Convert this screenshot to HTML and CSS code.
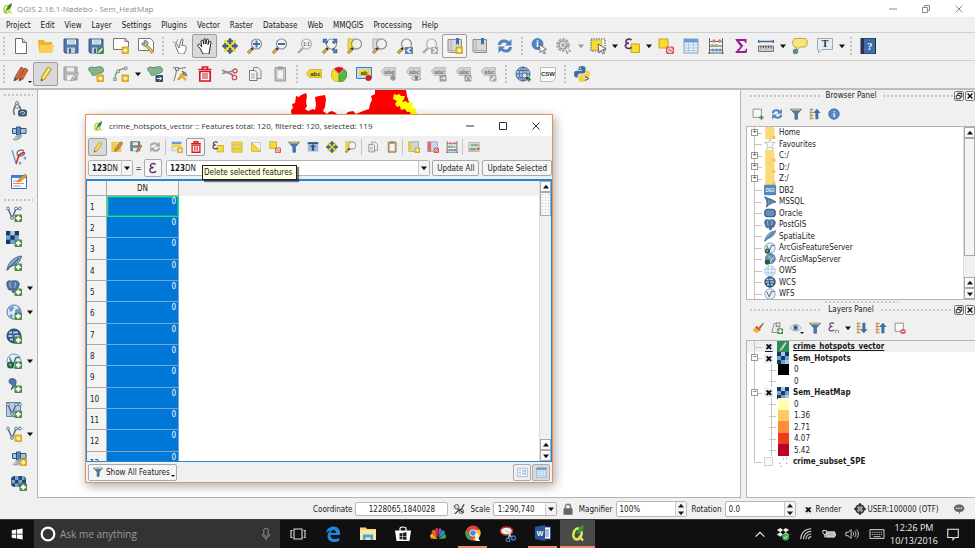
FILE: index.html
```html
<!DOCTYPE html>
<html lang="en">
<head>
<meta charset="utf-8">
<title>QGIS 2.16.1-Nødebo - Sem_HeatMap</title>
<link rel="stylesheet" href="styles.css">
</head>
<body>
<svg class="sprite" aria-hidden="true">
  <!-- badges -->
  <symbol id="plus" viewBox="0 0 16 16"><rect x="8.500" y="8.500" width="7.500" height="7.500" rx="1" fill="#4c8a4c"/><path d="M12.300 9.800v5M9.800 12.300h5" stroke="#fff" stroke-width="2"/></symbol>
  <symbol id="star" viewBox="0 0 16 16"><rect x="8.500" y="8.500" width="7.500" height="7.500" rx="1" fill="#d6ab1c"/><path d="M12.300 9.800v5M9.800 12.300h5M10.500 10.500l3.600 3.600M14.100 10.500l-3.600 3.600" stroke="#fff6c8" stroke-width="1"/></symbol>
  <symbol id="lens" viewBox="0 0 16 16"><path d="M1 15l5-5" stroke="#333" stroke-width="2.600"/><path d="M1 15l3.500-3.500" stroke="#e8b51c" stroke-width="2"/><circle cx="9.500" cy="6" r="5" fill="#f4f4f2" fill-opacity=".85" stroke="#8e8e8e" stroke-width="1.200"/></symbol>
  <symbol id="lens-grey" viewBox="0 0 16 16"><path d="M1 15l5-5" stroke="#a9a9a9" stroke-width="2.400"/><circle cx="9.500" cy="6" r="5" fill="#f3f3f3" stroke="#b3b3b3" stroke-width="1.200"/></symbol>
  <symbol id="cells" viewBox="0 0 12 12"><path fill="#6f9fd4" d="M0 0h12v12H0z"/><path fill="#173a63" d="M0 0h4v4H0zM8 0h4v4H8zM4 4h4v4H4zM0 8h4v4H0z"/><path fill="#a9c9ea" d="M4 0h4v4H4zM8 8h4v4H8z"/></symbol>
  <symbol id="globe" viewBox="0 0 16 16"><circle cx="8" cy="8" r="7" fill="#a9c6e6" stroke="#3f6a9b"/><path d="M8 1v14M1 8h14M2.500 4.500h11M2.500 11.500h11M8 1C3 4 3 12 8 15M8 1c5 3 5 11 0 14" fill="none" stroke="#3f6a9b" stroke-width=".9"/></symbol>

  <!-- project -->
  <symbol id="qgis" viewBox="0 0 16 16"><ellipse cx="7" cy="9" rx="4" ry="5.500" fill="none" stroke="#c9d85a" stroke-width="3" transform="rotate(15 7 9)"/><path d="M10 12l4 3" stroke="#c9d85a" stroke-width="2.500"/><path d="M4 15C6 10 7 4 14 0c1 5-2 9-6 10z" fill="#2e8b3d"/></symbol>
  <symbol id="new" viewBox="0 0 16 16"><path d="M2.500.5h7l4 4v11h-11z" fill="#fff" stroke="#6c6c6c"/><path d="M9.500.5v4h4" fill="#ddd" stroke="#6c6c6c"/></symbol>
  <symbol id="open" viewBox="0 0 16 16"><path d="M0 2h6l1 2h7v10H1z" fill="#eab52b"/><path d="M2 7h14l-2 8H1z" fill="#f9cf57"/></symbol>
  <symbol id="save" viewBox="0 0 16 16"><path d="M1 1h14v14H2l-1-1z" fill="#4c78ad" stroke="#365f92"/><path d="M4 1.500h9v5H4z" fill="#e9eef3"/><path d="M5 3h7M5 5h7" stroke="#9aa" stroke-width=".7"/><path d="M4 9.500h8V15H4z" fill="#c9cdd1"/><path d="M6 10.500h2V15H6z" fill="#3d5f86"/></symbol>
  <symbol id="saveas" viewBox="0 0 16 16"><use href="#save"/><rect x="9" y="9" width="7" height="7" rx="1" fill="#4c8a5c"/><path d="M10.500 14.500l4-4" stroke="#fff" stroke-width="1.500"/></symbol>
  <symbol id="composer" viewBox="0 0 16 16"><path d="M.5.500h12l3 3v8H.5z" fill="#fff" stroke="#777"/><path d="M12 .5v3h3.500" fill="#ddd" stroke="#777"/><use href="#star"/></symbol>
  <symbol id="manager" viewBox="0 0 16 16"><path d="M.5.500h12l3 3v9H.5z" fill="#fff" stroke="#777"/><path d="M9 8l6 7" stroke="#8b7420" stroke-width="3"/><path d="M9 8l6 7" stroke="#f0d15a" stroke-width="1.500"/><path d="M4 5l2.500 1L6 3c2-1 4 0 4 2.500L8.500 8C6 9 4 7.500 4 5z" fill="#bbb" stroke="#555" stroke-width=".8"/></symbol>

  <!-- navigation -->
  <symbol id="touch" viewBox="0 0 16 16"><path d="M7 10L5 6.500c-1-1-2 0-1.500 1L6 14l1 2h5l2-4V8.500c0-1-1.500-1.500-2-.5-.5-1-2-1-2 0l1-6c0-1.500-1.500-1.500-1.800-.2z" fill="#fff" stroke="#666" stroke-width=".9"/><path d="M1 4l4 1M6 1L3 8" stroke="#888" stroke-width=".8"/></symbol>
  <symbol id="hand" viewBox="0 0 16 16"><path d="M6 16L3.500 11 1 8c-1-1.500 1-2.300 2-1.300l1.700 2L4 3.500C3.800 2 5.500 1.600 6 3l.8 3V1.700c0-1.400 2-1.400 2 0V6l.8-4c.3-1.300 2-1 1.900.4L11 6.500l1.200-2.700c.7-1.200 2-.5 1.700.8L13 10l-1 6z" fill="#fff" stroke="#111" stroke-width=".9"/></symbol>
  <symbol id="pan" viewBox="0 0 16 16"><path d="M2 2h12v12H2z" fill="#f6dc34"/><path d="M8 0l3 3.500H9V6H7V3.500H5zM8 16l-3-3.500h2V10h2v2.500h2zM0 8l3.500-3v2H6v2H3.500v2zM16 8l-3.500 3V9H10V7h2.500V5z" fill="#3a67a3" stroke="#234677" stroke-width=".5"/></symbol>
  <symbol id="zoomin" viewBox="0 0 16 16"><use href="#lens"/><path d="M9.500 2.500v7M6 6h7" stroke="#3b6eb0" stroke-width="2"/></symbol>
  <symbol id="zoomout" viewBox="0 0 16 16"><use href="#lens"/><path d="M6 6h7" stroke="#3b6eb0" stroke-width="2"/></symbol>
  <symbol id="zoom11" viewBox="0 0 16 16"><use href="#lens-grey"/><text x="9.500" y="8" class="glyph-5" text-anchor="middle" fill="#666">1:1</text></symbol>
  <symbol id="zoomfull" viewBox="0 0 16 16"><use href="#lens"/><path d="M1 1h4L3.800 2.200 6 4 4 6 2.200 3.800 1 5zM15 1v4l-1.200-1.200L12 6l-2-2 2.200-1.800L11 1zM15 15h-4l1.200-1.200L10 12l2-2 1.800 2.200L15 11z" fill="#4e7fb8" stroke="#2b5288" stroke-width=".5"/></symbol>
  <symbol id="zoomsel" viewBox="0 0 16 16"><path d="M1 1h9v10H1z" fill="#f6dc34" stroke="#b99e1e" stroke-width=".6"/><use href="#lens"/></symbol>
  <symbol id="zoomlayer" viewBox="0 0 16 16"><path d="M1 1h9v10H1z" fill="#ddd" stroke="#888" stroke-width=".6"/><use href="#lens"/></symbol>
  <symbol id="zoomprev" viewBox="0 0 16 16"><use href="#lens"/><rect x="8" y="9" width="8" height="7" fill="#5a86ba"/><path d="M13.500 10l-3 2.500 3 2.500" fill="none" stroke="#fff" stroke-width="1.400"/></symbol>
  <symbol id="zoomnext" viewBox="0 0 16 16"><use href="#lens-grey"/><rect x="9" y="9" width="7" height="7" fill="#aaa"/><path d="M11 10l3 2.500-3 2.500" fill="none" stroke="#fff" stroke-width="1.400"/></symbol>
  <symbol id="bookmark" viewBox="0 0 16 16"><path d="M1 1.500h13.500v13H3c-1 0-2-.5-2-1.500z" fill="#d8d8d8" stroke="#8a8a8a"/><path d="M4 1.500v11M2 12.500h12" stroke="#aaa"/><path d="M9 0h3v7l-1.500-1.500L9 7z" fill="#3d6ea8"/></symbol>
  <symbol id="bookmarknew" viewBox="0 0 16 16"><use href="#bookmark"/><use href="#star"/></symbol>
  <symbol id="refresh" viewBox="0 0 16 16"><path d="M1 7C1 1.500 8 0 12 3.500L14.500 1v6.500H8l2-2C7 3.500 4.500 4.500 4 7zM15 9c0 5.500-7 7-11 3.500L1.500 15V8.500H8l-2 2c3 2 5.500 1 6-1.500z" fill="#4f84c0"/></symbol>
  <symbol id="refresh-grey" viewBox="0 0 16 16"><path d="M1 7C1 1.500 8 0 12 3.500L14.500 1v6.500H8l2-2C7 3.500 4.500 4.500 4 7zM15 9c0 5.500-7 7-11 3.500L1.500 15V8.500H8l-2 2c3 2 5.500 1 6-1.500z" fill="#a9a9a9"/></symbol>

  <!-- attributes -->
  <symbol id="identify" viewBox="0 0 16 16"><circle cx="6.500" cy="6" r="5.500" fill="#4f84c0" stroke="#2f5f9a" stroke-width=".6"/><text x="6.500" y="9" class="glyph-serif" text-anchor="middle" fill="#fff">i</text><path d="M8.500 6.500l7 5-3 .5 2 3.500-1.500.5-1.800-3.300L9 14.500z" fill="#fff" stroke="#555" stroke-width=".8"/></symbol>
  <symbol id="info" viewBox="0 0 16 16"><circle cx="8" cy="8" r="7" fill="#5488c4" stroke="#3465a0"/><text x="8" y="11.500" class="glyph-serif" text-anchor="middle" fill="#fff">i</text></symbol>
  <symbol id="action" viewBox="0 0 16 16"><circle cx="7" cy="7" r="5.500" fill="none" stroke="#a5a5a5" stroke-width="2.500" stroke-dasharray="2.500 1"/><circle cx="7" cy="7" r="4" fill="#ddd" stroke="#999"/><circle cx="7" cy="7" r="1.500" fill="#999"/><path d="M9 8l6 5-3 .2-.8 2.800z" fill="#fff" stroke="#888" stroke-width=".8"/></symbol>
  <symbol id="select" viewBox="0 0 16 16"><path d="M1 1h14v12H1z" fill="none" stroke="#555" stroke-dasharray="1.500 1"/><path d="M1.500 2h10v10h-10z" fill="#f6dc34" stroke="#b99e1e" stroke-width=".6"/><path d="M8 6l8 5-3.500.7 2 3.500-1.500.8-2-3.500L9 15z" fill="#fff" stroke="#444" stroke-width=".8"/></symbol>
  <symbol id="selexpr" viewBox="0 0 16 16"><path d="M7 6h8.500v8.500H7z" fill="#f6dc34" stroke="#c5a51e"/><path d="M7.500 2C5 .2 1.500 1.500 2 3.800 2.200 5 4 5.200 5 5.200 2.500 5.200 1 6.500 1.500 8.500 2.200 11 6 11 7.500 9.200" fill="none" stroke="#5c3566" stroke-width="1.700"/></symbol>
  <symbol id="deselect" viewBox="0 0 16 16"><path d="M1 1h9v9H1z" fill="#f6dc34" stroke="#c5a51e"/><rect x="8" y="8.500" width="8" height="7.500" rx="1.500" fill="#d9555c"/><circle cx="12" cy="12.200" r="2.300" fill="none" stroke="#fff"/><path d="M10.500 13.800l3-3.200" stroke="#fff"/></symbol>
  <symbol id="table" viewBox="0 0 16 16"><path d="M1 1h14v14H1z" fill="#e8f0f8" stroke="#7da3cc"/><path d="M1 1h14v3.500H1z" fill="#6b9bd0"/><path d="M1 7h14M1 10h14M1 12.500h14M5.500 4v11M10.500 4v11" stroke="#a8c3df" stroke-width=".9"/></symbol>
  <symbol id="abacus" viewBox="0 0 16 16"><path d="M1.500 0v16M14.500 0v16M1 3.500h14M1 8h14M1 12h14M0 15h16" stroke="#666" stroke-width="1"/><circle cx="6" cy="3" r="1.700" fill="#d9777b"/><circle cx="11.500" cy="3" r="1.700" fill="#d9777b"/><circle cx="4.500" cy="7.500" r="1.500" fill="#7bb87b"/><circle cx="8" cy="7.500" r="1.500" fill="#7bb87b"/><circle cx="5" cy="12" r="1.500" fill="#6b93c0"/><circle cx="8.500" cy="12" r="1.500" fill="#6b93c0"/><circle cx="12" cy="12" r="1.500" fill="#6b93c0"/></symbol>
  <symbol id="sigma" viewBox="0 0 16 16"><path d="M2.500 1h11v4h-1.200c-.3-1.600-.8-2-2.300-2H6.200l4 4.700L6 13h4.500c1.500 0 2.200-.8 2.600-2.200h1.200L13.500 15h-11v-1l5-5.500-5-6.500z" fill="#9b1d9b"/></symbol>
  <symbol id="measure" viewBox="0 0 16 16"><path d="M0 3.500h16M.5 2v3M15.500 2v3" stroke="#3c6799" stroke-width="1.500"/><path d="M.5 8h15v5.500H.5z" fill="#ccc" stroke="#777"/><path d="M3 8v2.500M5.500 8v2M8 8v2.500M10.500 8v2M13 8v2.500" stroke="#555"/></symbol>
  <symbol id="maptip" viewBox="0 0 16 16"><path d="M3 .5h10c3 0 3 8 0 8.500H8l-3.500 4V9H3C0 9 0 .5 3 .5z" fill="#f9e47b" stroke="#c5a83a"/><circle cx="3.500" cy="13.500" r="2.300" fill="#5d9c5d" stroke="#3c6799" stroke-width=".8"/></symbol>
  <symbol id="annot" viewBox="0 0 16 16"><path d="M.5.500h15v11H5L1.500 15v-3.500h-1z" fill="#e4eef5" stroke="#99abb8"/><text x="8" y="9" class="glyph-serif" text-anchor="middle" fill="#333">T</text></symbol>
  <symbol id="help" viewBox="0 0 16 16"><path d="M1 0h14.500v16H1z" fill="#3d6ea8" stroke="#1c2c40"/><path d="M1 0h3v16H1z" fill="#22354d"/><text x="9.700" y="11.500" class="glyph-serif" text-anchor="middle" fill="#fff">?</text></symbol>

  <!-- digitizing -->
  <symbol id="pencils" viewBox="0 0 16 16"><path d="M1 15l1-4L8 1l3 2-6 10zM6 15l1-4 5-9 3 2-5 9z" fill="#d2663a" stroke="#8e3d1b" stroke-width=".7"/><path d="M1 15l1-3 2 1zM6 15l1-3 2 1z" fill="#444"/></symbol>
  <symbol id="pencil" viewBox="0 0 16 16"><path d="M3 15l.5-4L10 1l3.500 2L7 13z" fill="#f2d43a" stroke="#9d8720" stroke-width=".8"/><path d="M5.300 12L11.800 2" stroke="#fff3a0" stroke-width="1"/><path d="M3 15l.3-2 1.500 1z" fill="#333"/></symbol>
  <symbol id="savegrey" viewBox="0 0 16 16"><path d="M1 1h13v13H1z" fill="#b5b5b5" stroke="#999"/><path d="M4 1.500h7v4H4zM4 9h7v5H4z" fill="#eee"/><path d="M8 15l1-3 5-6 2 1.500-5 6z" fill="#ccc" stroke="#888" stroke-width=".7"/></symbol>
  <symbol id="addfeat" viewBox="0 0 16 16"><path d="M1 2C3 0 6 2 8 1.500 11 0 15 0 15.500 4c0 4-4 3-6.500 4-2 2-5 2-5.500 0C3.500 6-.5 5 1 2z" fill="#82b58a" stroke="#4d8356" stroke-width=".8"/><use href="#star"/></symbol>
  <symbol id="addcurve" viewBox="0 0 16 16"><path d="M2 13C2 6 6 2.500 13 2.500" fill="none" stroke="#6fae7a" stroke-width="1.400"/><path d="M.7 12h2.600v2.600H.7zM4 4h2.500v2.500H4zM11.500 1h2.600v2.600h-2.600z" fill="#ddd" stroke="#777" stroke-width=".7"/><use href="#star"/></symbol>
  <symbol id="movefeat" viewBox="0 0 16 16"><path d="M1 2C3 0 6 2 8 1.500 11 0 15 0 15.500 4c0 4-4 3-6.500 4-2 2-5 2-5.500 0C3.500 6-.5 5 1 2z" fill="#82b58a" stroke="#4d8356" stroke-width=".8"/><rect x="8.500" y="9" width="7.500" height="7" rx="1" fill="#274a6d"/><path d="M9.800 12.500h4.500M12.300 10.500l2 2-2 2" stroke="#fff" fill="none"/></symbol>
  <symbol id="node" viewBox="0 0 16 16"><path d="M2 15L5 3l9-1.500M5 3L1 1.500" fill="none" stroke="#777"/><path d="M3.500 1.500h3v3h-3z" fill="#ddd" stroke="#666" stroke-width=".8"/><path d="M6 14l6-7" stroke="#cf9c1b" stroke-width="2.200"/><path d="M8 8l6 6" stroke="#e6b82d" stroke-width="2.500"/><path d="M10 5l4 2 1 3-3-1z" fill="#999" stroke="#555" stroke-width=".6"/></symbol>
  <symbol id="trash" viewBox="0 0 16 16"><path d="M1.500 3.500h13M5.500 3V1h5v2" fill="none" stroke="#d8141c" stroke-width="1.700"/><path d="M2.800 5.500h10.400V15H2.800z" fill="#fff" stroke="#d8141c" stroke-width="1.700"/><path d="M6 7v6M8 7v6M10 7v6" stroke="#d8141c" stroke-width="1"/></symbol>
  <symbol id="cut" viewBox="0 0 16 16"><path d="M0 4l11 5M0 7.500L11 5" stroke="#8a8a8a" stroke-width="1.600"/><circle cx="13" cy="5" r="2" fill="none" stroke="#c7545b" stroke-width="1.300"/><circle cx="12.500" cy="11.500" r="2.200" fill="none" stroke="#c7545b" stroke-width="1.300"/><path d="M9 8l2 2" stroke="#c7545b" stroke-width="1.300"/></symbol>
  <symbol id="copy" viewBox="0 0 16 16"><path d="M6.500 1.500h4.500l3 3v8H6.500z" fill="#eee" stroke="#888"/><path d="M2.500 4.500H8l2 2v8H2.500z" fill="#f5f5f5" stroke="#777"/><path d="M4 8h4M4 10h4M4 12h4" stroke="#999" stroke-width=".8"/></symbol>
  <symbol id="paste" viewBox="0 0 16 16"><path d="M3 1.500h10.500v13.500H3z" fill="#c8c8c8" stroke="#999"/><path d="M5 4h6.500v9H5z" fill="#f4f4f4" stroke="#aaa" stroke-width=".6"/><path d="M6 .5h4.500v2.500H6z" fill="#999"/></symbol>
  <symbol id="paste-y" viewBox="0 0 16 16"><path d="M3 1.500h10.500v13.500H3z" fill="#c9a577" stroke="#8e6f45"/><path d="M5 4h6.500v9H5z" fill="#f4f4f4"/><path d="M6 .5h4.500v2.500H6z" fill="#888"/></symbol>

  <!-- labels -->
  <symbol id="label" viewBox="0 0 16 16"><path d="M3.500 3.500H16v8H3.500L0 7.500z" fill="#f3d530" stroke="#c7aa1e" stroke-width=".7"/><text x="9.300" y="9.500" class="glyph-abc" text-anchor="middle" fill="#333">abc</text></symbol>
  <symbol id="label-grey" viewBox="0 0 16 16"><path d="M3.500 1.500H14.500v8H3.500L0 5.500z" fill="#cfcfcf" stroke="#b2b2b2" stroke-width=".7"/><text x="8.500" y="7.500" class="glyph-abc" text-anchor="middle" fill="#777">abc</text></symbol>
  <symbol id="diagram" viewBox="0 0 16 16"><path d="M8 8L2.500 3a7.500 7.500 0 0 1 11 0z" fill="#d8141c" stroke="#fff" stroke-width=".6"/><path d="M8 8.500V16A7.500 7.500 0 0 1 2 3.500z" fill="#f2e02c" stroke="#a9a01a" stroke-width=".6"/><path d="M8 8.500V16a7.500 7.500 0 0 0 6-12.500z" fill="#58b847" stroke="#2f8324" stroke-width=".6"/></symbol>
  <symbol id="labelpin" viewBox="0 0 16 16"><path d="M.5 1.500h15v11H.5z" fill="#bfdcf7" stroke="#3d7bc6"/><path d="M4 3.500h10v6.500H4L1.500 7z" fill="#f3d530"/><text x="8" y="8.700" class="glyph-abc" text-anchor="middle" fill="#333">ab</text><circle cx="12.500" cy="12" r="3" fill="#c81e24"/></symbol>
  <symbol id="labelpin-grey" viewBox="0 0 16 16"><use href="#label-grey"/><path d="M12 5v6" stroke="#888"/><circle cx="12" cy="12" r="2.700" fill="#999"/></symbol>
  <symbol id="labeleye" viewBox="0 0 16 16"><use href="#label-grey"/><path d="M5.500 12.500c2-3 7-3 9.500 0-2.500 2.500-7.500 2.500-9.500 0z" fill="#f1f1f1" stroke="#888"/><circle cx="10.300" cy="12.300" r="1.700" fill="#777"/></symbol>
  <symbol id="labelmove" viewBox="0 0 16 16"><use href="#label-grey"/><rect x="8.500" y="9" width="7" height="6.500" rx="1" fill="#999"/><path d="M10 12.200h4M12.500 10.500l1.800 1.700-1.800 1.700" stroke="#fff" fill="none"/></symbol>
  <symbol id="labelrotate" viewBox="0 0 16 16"><use href="#label-grey"/><rect x="8.500" y="9" width="7" height="6.500" rx="1" fill="#999"/><path d="M10.500 14c-1-2 .5-3.500 2-3.500s2.500 2 1.500 3.500" stroke="#fff" fill="none"/></symbol>
  <symbol id="labeledit" viewBox="0 0 16 16"><use href="#label-grey"/><rect x="8.500" y="9" width="7" height="6.500" rx="1" fill="#aaa"/><path d="M10 14.500l4-4" stroke="#fff" stroke-width="1.500"/></symbol>
  <symbol id="metasearch" viewBox="0 0 16 16"><use href="#globe"/><path d="M11 11l3 3" stroke="#333" stroke-width="2"/><circle cx="9.500" cy="9.500" r="2.500" fill="#dfeaf6" stroke="#666"/><path d="M14 11.500v4M12 13.500h4" stroke="#2f8a38" stroke-width="1.500"/></symbol>
  <symbol id="csw" viewBox="0 0 16 16"><path d="M.5 1.500h15v10.500L12 15.500H.5z" fill="#fafafa" stroke="#bbb"/><text x="8" y="9.500" class="glyph-csw" text-anchor="middle" fill="#333">CSW</text></symbol>
  <symbol id="python" viewBox="0 0 16 16"><path d="M8 0C5 0 4.500 1 4.500 2.500V4H8v.8H2.500C1 4.800 0 6 0 8s1 3.500 2.500 3.500h1.300V9.800C3.800 8.500 5 7.500 6 7.500h3.500c1.200 0 2-1 2-2v-3C11.500.8 10.500 0 8 0z" fill="#3a6f9f"/><path d="M8 16c3 0 3.500-1 3.500-2.500V12H8v-.8h5.500c1.500 0 2.500-1.200 2.500-3.200s-1-3.500-2.500-3.500h-1.300v1.700C12.200 7.500 11 8.500 10 8.500H6.500c-1.200 0-2 1-2 2v3c0 1.700 1 2.500 3.500 2.500z" fill="#f5cf45"/><path d="M11 10.500l4 2-4 2" fill="none" stroke="#444"/><circle cx="6.200" cy="2.200" r=".7" fill="#fff"/></symbol>

  <!-- side toolbar -->
  <symbol id="gps" viewBox="0 0 16 16"><circle cx="6" cy="2" r="1.500" fill="none" stroke="#777"/><path d="M5 3.500C2 8 2 11 3.500 14M7 3.500c2 2 3 4 3 6" fill="none" stroke="#777" stroke-width="1.600"/><path d="M4 7h5" stroke="#777"/><rect x="7" y="8.500" width="9" height="7" rx="2.500" fill="#34566f"/><path d="M9 12c0-2 4-2 5 0-1 2-3 2-3 0" fill="none" stroke="#cfe0ee"/></symbol>
  <symbol id="satellite" viewBox="0 0 16 16"><path d="M1.500 3.500h13.500v5H1.500z" fill="#a6c4e4" stroke="#2f557f"/><path d="M5.500 2h4v8h-4z" fill="#5b86b8" stroke="#2f557f"/><path d="M4 12c2 .5 4-1 4.500-2.500M2 14c4 1.500 7-1 8.500-4" fill="none" stroke="#9aa6b3" stroke-width="1.800"/></symbol>
  <symbol id="topology" viewBox="0 0 16 16"><path d="M13 1.500C8 0 5 3 6.500 6 9 8 14 7 13.500 3" fill="none" stroke="#666" stroke-width="1.200"/><path d="M5 15l3-9 5-3" fill="none" stroke="#d6202a" stroke-width="1.600"/><path d="M1 1l4 13" stroke="#6d94c0" stroke-width="1.300"/><circle cx="14" cy="9" r="1.500" fill="#7ba5d4"/><circle cx="9" cy="14" r="1.500" fill="#7ba5d4"/></symbol>
  <symbol id="form" viewBox="0 0 16 16"><path d="M.5 2.500h15v13H.5z" fill="#fff" stroke="#2f6fc8"/><path d="M.5 2.500h15V5H.5z" fill="#3f83e0"/><path d="M2 8h9M2 10.500h11M2 13h8" stroke="#d88" stroke-width="1"/><path d="M6 9l1.500-2.500L14 1l2 2-6.500 5z" fill="#eda32a" stroke="#a46a0c" stroke-width=".6"/></symbol>
  <symbol id="vee" viewBox="0 0 16 16"><path d="M2 2.500L6 12l4-9 4-.5" fill="none" stroke="#4a6784" stroke-width="1.400"/><circle cx="2" cy="2.500" r="1.400" fill="#fff" stroke="#4a6784" stroke-width=".9"/><circle cx="6" cy="12" r="1.400" fill="#fff" stroke="#4a6784" stroke-width=".9"/><circle cx="10" cy="2.500" r="1.400" fill="#fff" stroke="#4a6784" stroke-width=".9"/><circle cx="14" cy="2.500" r="1.400" fill="#fff" stroke="#4a6784" stroke-width=".9"/></symbol>
  <symbol id="addvector" viewBox="0 0 16 16"><use href="#vee"/><use href="#plus"/></symbol>
  <symbol id="newvector" viewBox="0 0 16 16"><use href="#vee"/><use href="#star"/></symbol>
  <symbol id="addraster" viewBox="0 0 16 16"><use href="#cells" x="0" y="0" width="13" height="13"/><use href="#plus"/></symbol>
  <symbol id="feather" viewBox="0 0 16 16"><path d="M1 15C2 8 7 2 15.500 1 15 6 10 11 3 11.500z" fill="#7fa9d3" stroke="#34597f" stroke-width=".8"/><path d="M1 15.500L13 3" stroke="#243f5c" stroke-width="1"/></symbol>
  <symbol id="addfeather" viewBox="0 0 16 16"><use href="#feather"/><use href="#plus"/></symbol>
  <symbol id="elephant" viewBox="0 0 16 16"><path d="M1 4C1 0 5 1 7 1.500c4-1.500 8 0 8 3 0 3-2 5-2 6-1 1.500-3 0-3-1.500v4c0 2-3 2-3 0V10c-1 2-4 2-4.500 0C2 8 1 7 1 4z" fill="#4f7aa8" stroke="#29486b"/><path d="M5 2c-1.500 3 0 5 1 7M10 2c2 3 0 5 0 7" fill="none" stroke="#c8daed" stroke-width=".8"/></symbol>
  <symbol id="addpostgis" viewBox="0 0 16 16"><use href="#elephant" width="14" height="14"/><use href="#plus"/></symbol>
  <symbol id="world" viewBox="0 0 16 16"><circle cx="8" cy="8" r="7" fill="#dbe8f5" stroke="#4a6f9a"/><path d="M3 4l4-2 1 2-2 3-2 1zM9 6l4-2 1.500 4-3 4-2-2zM4 10l3 1-1 3-2-1z" fill="#6b9bd0"/></symbol>
  <symbol id="addwms" viewBox="0 0 16 16"><use href="#world"/><use href="#plus"/></symbol>
  <symbol id="wcs" viewBox="0 0 16 16"><circle cx="8" cy="8" r="7" fill="#36587e" stroke="#243f5c"/><path d="M3 4.500h3M7 4.500h5M2.500 8h4M8.500 8h5M4 11.500h3M9 11.500h3" stroke="#a9cbed" stroke-width="2.200"/></symbol>
  <symbol id="addwcs" viewBox="0 0 16 16"><use href="#wcs"/><use href="#plus"/></symbol>
  <symbol id="wfs" viewBox="0 0 16 16"><circle cx="8" cy="8" r="7" fill="#e6eff8" stroke="#6f94bc"/><path d="M3.500 4.500L7 12l3-7.500h4" fill="none" stroke="#4a6784" stroke-width="1.300"/></symbol>
  <symbol id="arcfeat" viewBox="0 0 16 16"><use href="#wfs"/><circle cx="4.500" cy="12" r="3.500" fill="#1f5f42"/><path d="M2.500 11l2-1 1.500 2-2 2z" fill="#6db36d"/></symbol>
  <symbol id="arcmap" viewBox="0 0 16 16"><circle cx="8.500" cy="7.500" r="6.500" fill="#6d93bb" stroke="#38597d"/><path d="M5 3l5 5 4-2M8 13l2-5" stroke="#dbe8f5" fill="none"/><circle cx="4.500" cy="12" r="3.500" fill="#1f5f42"/></symbol>
  <symbol id="addwfs" viewBox="0 0 16 16"><use href="#arcfeat"/><use href="#plus"/></symbol>
  <symbol id="addcsv" viewBox="0 0 16 16"><path d="M3 4c0-3 6-3.500 7 0 .5 4-2 7-5 8.500 1-2 2-3.500 1.500-5C5 7.500 3 6.500 3 4z" fill="#4f7aa8" stroke="#29486b" stroke-width=".8"/><use href="#plus"/></symbol>
  <symbol id="addvirtual" viewBox="0 0 16 16"><path d="M.5.500h14v14H.5z" fill="#b9cde2" stroke="#6787aa"/><use href="#vee"/><use href="#plus"/></symbol>
  <symbol id="satstar" viewBox="0 0 16 16"><use href="#satellite"/><use href="#star"/></symbol>
  <symbol id="mask" viewBox="0 0 16 16"><rect x="0" y="1" width="15" height="11" rx="4" fill="#29486b"/><path d="M4 1h3.500v4H4zM11 1h2.500v4H11zM.5 5H4v3.500H.5zM7.500 5H11v3.500H7.500zM4 8.500h3.500V12H4zM11 8.500h3V12h-3z" fill="#7ba5d4"/><use href="#plus"/></symbol>

  <!-- panels and table tools -->
  <symbol id="editmulti" viewBox="0 0 16 16"><path d="M1 2h12v3H1zM1 6.500h12v3H1zM1 11h12v3H1z" fill="#f6dc34" stroke="#c5a51e" stroke-width=".7"/><path d="M5 14l1-4 7-9 3 2-7 9z" fill="#e0893a" stroke="#8e3d1b" stroke-width=".7"/></symbol>
  <symbol id="saveedit" viewBox="0 0 16 16"><path d="M1 1h12v12H1z" fill="#6f8796" stroke="#4c6574"/><path d="M3.500 1.500h7v4h-7zM4 9h6v4H4z" fill="#e5eaec"/><path d="M8 15l1-3 5-7 2 1.500-5 7z" fill="#e0893a" stroke="#8e3d1b" stroke-width=".6"/></symbol>
  <symbol id="addrow" viewBox="0 0 16 16"><path d="M1 1h13v3H1z" fill="#6b9bd0"/><path d="M1 4h13v3H1z" fill="#f6dc34"/><path d="M1 7.500h13V13H1z" fill="#e8e8e8" stroke="#aaa" stroke-width=".8"/><use href="#star"/></symbol>
  <symbol id="selall" viewBox="0 0 16 16"><path d="M1 1.500h14v3.500H1zM1 6.500h14V10H1zM1 11.500h14V15H1z" fill="#f6dc34" stroke="#c5a51e" stroke-width=".8"/></symbol>
  <symbol id="invert" viewBox="0 0 16 16"><path d="M2 2h12v12z" fill="#f2f2f2" stroke="#bbb"/><path d="M2 2v12h12z" fill="#f6dc34" stroke="#c5a51e" stroke-width=".8"/></symbol>
  <symbol id="funnel" viewBox="0 0 16 16"><path d="M.5 1.500h15L10 8v7H6.500V8z" fill="#4a7aad" stroke="#31577f" stroke-width=".8"/><path d="M2 2.500h12" stroke="#cfc84a" stroke-width="1.800"/></symbol>
  <symbol id="movetop" viewBox="0 0 16 16"><path d="M1 1.500h14V4H1z" fill="#31577f"/><path d="M1 4h14v10H1z" fill="#9dbbdb"/><path d="M8 4l4 4H9.500v5h-3V8H4z" fill="#31577f"/></symbol>
  <symbol id="newfield" viewBox="0 0 16 16"><path d="M1 1h13v13H1z" fill="#c4d8ec" stroke="#7da3cc"/><path d="M1 1h4.500v13H1z" fill="#f0cf3c"/><use href="#star"/></symbol>
  <symbol id="delfield" viewBox="0 0 16 16"><path d="M1 1h13v13H1z" fill="#c4d8ec" stroke="#7da3cc"/><path d="M1 1h4.500v13H1z" fill="#e66a6a"/><rect x="9" y="9" width="7" height="7" rx="1" fill="#d9555c"/><path d="M10.500 10.500l4 4M14.500 10.500l-4 4" stroke="#fff"/></symbol>
  <symbol id="condfmt" viewBox="0 0 16 16"><path d="M1 2h14v12H1z" fill="#ddd" stroke="#aaa"/><path d="M4 4h10v3H4z" fill="#86b886"/><path d="M2 9.500h9v3H2z" fill="#8a9a8a"/><path d="M12 9h3v3h-3z" fill="#d9555c"/></symbol>
  <symbol id="addlayer" viewBox="0 0 16 16"><path d="M1.500 1.500h11v11h-11z" fill="#f7f7f7" stroke="#777"/><path d="M12.500 9.500v6M9.500 12.500h6" stroke="#3f8a46" stroke-width="2"/></symbol>
  <symbol id="remlayer" viewBox="0 0 16 16"><path d="M1.500 1.500h11v11h-11z" fill="#f7f7f7" stroke="#777"/><rect x="8.500" y="9.500" width="7" height="6" rx="2" fill="#d9555c"/><path d="M10 12.500h4" stroke="#fff" stroke-width="1.200"/></symbol>
  <symbol id="collapse" viewBox="0 0 16 16"><path d="M1 2h5M1 6h5M1 10h5M1 14h5" stroke="#e09a35" stroke-width="2"/><path d="M2.500 1v14" stroke="#888"/><path d="M10.500 1l5 5.500h-3V15h-4V6.500h-3z" fill="#3d6ea8"/></symbol>
  <symbol id="expand" viewBox="0 0 16 16"><path d="M1 2h5M1 6h5M1 10h5M1 14h5" stroke="#e09a35" stroke-width="2"/><path d="M2.500 1v14" stroke="#888"/><path d="M10.500 15l5-5.500h-3V1h-4v8.500h-3z" fill="#3d6ea8"/></symbol>
  <symbol id="brush" viewBox="0 0 16 16"><path d="M9 7l6-6 1 1-5 6.500z" fill="#a1622a"/><path d="M6 5l6 5-2 2-6-4z" fill="#d8493c"/><path d="M4 7l6 5-4 3-5-4z" fill="#f0b52d"/></symbol>
  <symbol id="addgroup" viewBox="0 0 16 16"><path d="M1 14l3-12h4l-1 4h4l3 8z" fill="#e8e8e8" stroke="#777"/><path d="M7 1h5v5H7z" fill="#ddd" stroke="#777"/><use href="#plus"/></symbol>
  <symbol id="eye" viewBox="0 0 16 16"><path d="M0 8c4-6 11-6 15 0-4 5-11 5-15 0z" fill="#eef3f8" stroke="#888"/><circle cx="7.500" cy="7.500" r="3.500" fill="#6f94bc"/><circle cx="7.500" cy="7.500" r="1.500" fill="#223"/></symbol>
  <symbol id="epsilon" viewBox="0 0 16 16"><path d="M11.500 3.500C9 .8 4.500 2 4.500 4.800 4.500 7 7 7.500 9 7.500 5.500 7.500 3.500 9 3.700 11c.3 3.500 6 4 8.500 1.300" fill="none" stroke="#5c3566" stroke-width="1.800"/></symbol>
  <symbol id="epsfilter" viewBox="0 0 16 16"><path d="M8 2C5.500.2 2 1.500 2.500 4 2.700 5.500 4.500 6 6 6 3 6 1 7.500 1.500 9.800 2.200 12.500 6 12.500 8 10.500" fill="none" stroke="#5c3566" stroke-width="1.500"/><path d="M10 15v-4h4v4" fill="none" stroke="#888" stroke-width="1.200"/></symbol>
  <symbol id="folder" viewBox="0 0 16 16"><path d="M2 0h9l3 2v14H2z" fill="#fbdc84"/><path d="M11 0h2v11h2v5H2V0z" fill="#fbd977"/><path d="M11 12h4v4h-4z" fill="#f3c24e"/></symbol>
  <symbol id="favourite" viewBox="0 0 16 16"><path d="M8 1l2 5h5l-4 3.500 1.500 5.500L8 12l-4.500 3L5 9.500 1 6h5z" fill="#fafaf2" stroke="#aaa99a" stroke-width=".9"/></symbol>
  <symbol id="db2" viewBox="0 0 16 16"><rect x="0" y="1" width="16" height="14" rx="1.500" fill="#5488c4"/><text x="8" y="10" class="glyph-csw" text-anchor="middle" fill="#dce9f7">DB2</text></symbol>
  <symbol id="mssql" viewBox="0 0 16 16"><path d="M1 1c5 3 10 3 15 7-5 1-9 3-13 7 2-5 1-9-2-14z" fill="#4f7aa8" stroke="#34597f"/><path d="M6 5c1 2 1 4 0 6M10 6c1 1 1 2 0 4" stroke="#c8daed" stroke-width=".7" fill="none"/></symbol>
  <symbol id="oracle" viewBox="0 0 16 16"><rect x="1" y="3" width="14" height="10" rx="4" fill="#5f8dc0" stroke="#2f557f" stroke-width="1.500"/></symbol>
  <symbol id="ows" viewBox="0 0 16 16"><circle cx="8" cy="8" r="7" fill="#f2f7fc" stroke="#9bb9d9"/><path d="M5.500 1.500v13M10.500 1.500v13M1 5.500h14M1 10.500h14" stroke="#9bb9d9"/></symbol>
  <symbol id="vlayer" viewBox="0 0 16 16"><path d="M0 0h16v16H0z" fill="#23915c"/><path d="M3 14l1.500-4L11 1l2 1.500L7 12z" fill="#d8d8b0" stroke="#777" stroke-width=".7"/></symbol>
  <symbol id="points" viewBox="0 0 16 16"><path d="M3 9h1.500v1.500H3zM8 3h1.500v1.500H8zM12 2h1.500v1.500H12zM5 13h1.500v1.500H5zM12 9h1.500v1.500H12z" fill="#999"/></symbol>
  <symbol id="formview" viewBox="0 0 16 16"><path d="M1 2h14v12H1z" fill="#fff" stroke="#7da3cc"/><path d="M3 5h3M3 8h3M3 11h3" stroke="#888"/><path d="M8 4.500h5v2H8zM8 8.500h5v2H8z" fill="#cfe0f2" stroke="#7da3cc" stroke-width=".7"/></symbol>
  <symbol id="caret" viewBox="0 0 8 8"><path d="M0 2h8L4 7z" fill="currentColor"/></symbol>
  <symbol id="caret-up" viewBox="0 0 8 8"><path d="M0 6h8L4 1z" fill="currentColor"/></symbol>
  <symbol id="min" viewBox="0 0 10 10"><path d="M1 5h8" stroke="currentColor"/></symbol>
  <symbol id="max" viewBox="0 0 10 10"><path d="M1.500 1.500h7v7h-7z" fill="none" stroke="currentColor"/></symbol>
  <symbol id="restore" viewBox="0 0 10 10"><path d="M1.500 3.500h5v5h-5zM3.500 3V1.500h5v5H7" fill="none" stroke="currentColor"/></symbol>
  <symbol id="close" viewBox="0 0 10 10"><path d="M1.500 1.500l7 7M8.500 1.500l-7 7" stroke="currentColor"/></symbol>
  <symbol id="float" viewBox="0 0 10 10"><path d="M1.500 4.500h5v4h-5zM3.500 4V1.500h5v5H7M3.500 2h5" fill="none" stroke="#222" stroke-width="1.200"/></symbol>
  <symbol id="xmark" viewBox="0 0 10 10"><path d="M2 2l6 6M8 2L2 8" stroke="#111" stroke-width="1.800"/></symbol>

  <!-- status bar -->
  <symbol id="extents" viewBox="0 0 16 16"><path d="M2 14C6 14 5 9 9 9s3-5 6-7M1 4l13 9" fill="none" stroke="#333" stroke-width="1.400"/><circle cx="5" cy="5" r="3" fill="#ddd" stroke="#333"/><circle cx="11" cy="11" r="3" fill="none" stroke="#333"/></symbol>
  <symbol id="lock" viewBox="0 0 16 16"><path d="M4.500 8V5c0-4.500 7-4.500 7 0v3" fill="none" stroke="#777" stroke-width="1.800"/><rect x="2" y="7" width="12" height="8.500" rx="1" fill="#666"/></symbol>
  <symbol id="crs" viewBox="0 0 16 16"><circle cx="8" cy="8" r="5.500" fill="#999" stroke="#333" stroke-width="2"/><path d="M8 0v5M8 11v5M0 8h5M11 8h5" stroke="#222" stroke-width="1.800"/></symbol>
  <symbol id="bubble" viewBox="0 0 16 16"><path d="M8 2c9 0 9 10 2 10l-2 3v-3C-1 12-1 2 8 2z" fill="#666"/><circle cx="5" cy="7" r="1" fill="#fff"/><circle cx="8" cy="7" r="1" fill="#fff"/><circle cx="11" cy="7" r="1" fill="#fff"/></symbol>

  <!-- desktop -->
  <symbol id="windows" viewBox="0 0 16 16"><path d="M1 3l6-1v5.500H1zM8 1.900L15.500.8v6.700H8zM1 8.500h6V14l-6-.9zM8 8.500h7.500v6.700L8 14.100z" fill="#fff"/></symbol>
  <symbol id="cortana" viewBox="0 0 16 16"><circle cx="8" cy="8" r="6.300" fill="none" stroke="#fff" stroke-width="2.200"/></symbol>
  <symbol id="mic" viewBox="0 0 16 16"><rect x="5.500" y="1.500" width="5" height="9" rx="2" fill="none" stroke="#999"/><path d="M4 8c0 6 8 6 8 0M8 12.500V15" fill="none" stroke="#999"/></symbol>
  <symbol id="taskview" viewBox="0 0 16 16"><path d="M4 3h8v10H4zM2.500 4.500H1v7h1.500M13.500 4.500H15v7h-1.500" fill="none" stroke="#ddd" stroke-width="1.100"/></symbol>
  <symbol id="edge" viewBox="0 0 16 16"><path d="M1 7.500C1.500 2.500 5 .5 8.500.5c4.500 0 7 3 6.500 8.500H5.500c0 3 2 4 4.500 4 1.700 0 3-.4 4.300-1.200v3C13 15.600 11 16 9 16c-4 0-6.500-2.500-6.500-6 0-2.500 1.500-4.500 3.500-5.500C3.500 4.800 2 6 1 7.500zm4.700-.8H11C11 5 10 4 8.500 4S6 5 5.700 6.700z" fill="#1d86e0"/></symbol>
  <symbol id="explorer" viewBox="0 0 16 16"><path d="M0 1.500h6l1 1.500h9v11H0z" fill="#f4d778"/><path d="M0 4h16v10H0z" fill="#fbe8a0"/><path d="M3 14V8.500h10V14h-2.500v-2.500h-5V14z" fill="#45a6e5"/></symbol>
  <symbol id="store" viewBox="0 0 16 16"><path d="M0 4.500h16L14.500 15h-13z" fill="#fff"/><path d="M5 6V2.500C5 .5 11 .5 11 2.500V6" fill="none" stroke="#fff" stroke-width="1.200"/><path d="M4.500 7.300l3-.4V10h-3zM8 6.800l3.500-.5V10H8zM4.500 10.500h3v3l-3-.4zM8 10.500h3.500v3.600L8 13.600z" fill="#222"/></symbol>
  <symbol id="peacock" viewBox="0 0 16 16"><path d="M7.500 13L1 12.500C-1 9 1 7 3 8z" fill="#f2b21b"/><path d="M7.500 12L1.500 7C1.500 3.500 5 3 5.500 5z" fill="#e8641f"/><path d="M7.500 11L5 4C5.500 1 8 1 8 4z" fill="#d8343f"/><path d="M8.500 11V4c.5-3 3.500-2 3 1z" fill="#8a5bb5"/><path d="M8.500 12l3-7c2-2 4 0 3 3z" fill="#2f8bd8"/><path d="M8.500 13l6-5c2 1 2 4 0 4.500z" fill="#3fae49"/></symbol>
  <symbol id="chrome" viewBox="0 0 16 16"><circle cx="8" cy="8" r="7.500" fill="#e44234"/><path d="M1 5l4 6 2 4.400C2 15-1 10 1 5z" fill="#33a852"/><path d="M15 5H8l3.500 5-4 5.500C14 15.500 17 10 15 5z" fill="#fbc116"/><circle cx="8" cy="8" r="3.600" fill="#fff"/><circle cx="8" cy="8" r="2.800" fill="#4587f2"/><path d="M10 10c0-2 4-2 4 0 0 1.500-.5 2-.5 3L15 16h-5l.5-3c0-1-.5-1.500-.5-3z" fill="#eee"/></symbol>
  <symbol id="snip" viewBox="0 0 16 16"><ellipse cx="6.500" cy="5" rx="6" ry="4" fill="#f1f1f1" stroke="#c33" stroke-width="1.500"/><path d="M6 4l6 8M11 5l-3 8" stroke="#ccc" stroke-width="1.300"/><circle cx="13.500" cy="12" r="2" fill="none" stroke="#3d7bc6" stroke-width="1.300"/><circle cx="8" cy="14" r="1.800" fill="none" stroke="#3d7bc6" stroke-width="1.300"/></symbol>
  <symbol id="word" viewBox="0 0 16 16"><path d="M8 2h7.500v12H8z" fill="#fff" stroke="#2b579a"/><path d="M10 5h4M10 7h4M10 9h4M10 11h4" stroke="#2b579a" stroke-width=".8"/><path d="M0 2l10-2v16L0 14z" fill="#2b579a"/><text x="5" y="10.500" class="glyph-w" text-anchor="middle" fill="#fff">W</text></symbol>
  <symbol id="qlogo" viewBox="0 0 16 16"><ellipse cx="7.500" cy="9" rx="4" ry="5.500" fill="none" stroke="#dfe84e" stroke-width="2.600" transform="rotate(15 7.500 9)"/><path d="M9 11l4 4.500" stroke="#dfe84e" stroke-width="2.400"/><path d="M7 9.500c0-4 2-7.500 6.500-9.500.8 5-2 7.500-4.500 8z" fill="#2e9b3d"/></symbol>
  <symbol id="chevron" viewBox="0 0 16 16"><path d="M3 11l5-5 5 5" fill="none" stroke="#eee" stroke-width="1.400"/></symbol>
  <symbol id="dropbox" viewBox="0 0 16 16"><path d="M5 1L1 3.500l4 2.500 3-2.500zM11 1l4 2.500L11 6 8 3.500zM5 6L1 8.500 5 11l3-2.500zM11 6l4 2.500-4 2.500-3-2.500z" fill="#eee"/><circle cx="11" cy="11.500" r="4" fill="#3dae4d"/><path d="M9 11.500l1.500 1.500 2.500-3" fill="none" stroke="#fff"/></symbol>
  <symbol id="wifi" viewBox="0 0 16 16"><path d="M2 14C2 7 7 2 14 2M5 14c0-5 4-9 9-9M8 14c0-3.500 2.500-6 6-6M11 14c0-2 1-3 3-3" fill="none" stroke="#ccc" stroke-width="1.200"/></symbol>
  <symbol id="battery" viewBox="0 0 16 16"><path d="M4.500 5.500h10v6h-10z" fill="#bbb" stroke="#eee"/><path d="M15 7h1v3h-1z" fill="#eee"/><path d="M1 4v3c0 2 4 2 4 0V4zM3 8v4" stroke="#eee" fill="#111"/></symbol>
  <symbol id="speaker" viewBox="0 0 16 16"><path d="M1 6h2.500L7 3v10L3.500 10H1zM9 6c1 1 1 3 0 4M11 4.500c2 2 2 5 0 7M13 3c3 3 3 7 0 10" fill="none" stroke="#ddd"/></symbol>
  <symbol id="keyboard" viewBox="0 0 18 16"><path d="M1 3h16v10H1z" fill="none" stroke="#ddd" stroke-width="1.100"/><path d="M3 6h12M3 8.500h12" stroke="#ddd" stroke-dasharray="1.300 .8"/><path d="M5 11h8" stroke="#ddd"/></symbol>
  <symbol id="notify" viewBox="0 0 16 16"><path d="M2 2.500h12V12h-4l-2 2.500V12H2z" fill="none" stroke="#eee" stroke-width="1.200"/></symbol>
</svg>

<div class="app">
  <header class="titlebar">
    <svg class="app-icon"><use href="#qgis"/></svg>
    <h1 class="title">QGIS 2.16.1-Nødebo - Sem_HeatMap</h1>
    <div class="window-buttons">
      <button aria-label="Minimize"><svg><use href="#min"/></svg></button>
      <button aria-label="Restore"><svg><use href="#restore"/></svg></button>
      <button aria-label="Close"><svg><use href="#close"/></svg></button>
    </div>
  </header>

  <nav class="menubar">
    <button>Project</button><button>Edit</button><button>View</button><button>Layer</button><button>Settings</button><button>Plugins</button><button>Vector</button><button>Raster</button><button>Database</button><button>Web</button><button>MMQGIS</button><button>Processing</button><button>Help</button>
  </nav>

  <div class="toolbar">
    <i class="grip"></i>
    <button class="tool" aria-label="New project"><svg><use href="#new"/></svg></button>
    <button class="tool" aria-label="Open project"><svg><use href="#open"/></svg></button>
    <button class="tool" aria-label="Save project"><svg><use href="#save"/></svg></button>
    <button class="tool" aria-label="Save project as"><svg><use href="#saveas"/></svg></button>
    <button class="tool" aria-label="New print composer"><svg><use href="#composer"/></svg></button>
    <button class="tool" aria-label="Composer manager"><svg><use href="#manager"/></svg></button>
    <i class="grip"></i>
    <button class="tool" aria-label="Touch zoom and pan"><svg><use href="#touch"/></svg></button>
    <button class="tool pressed" aria-label="Pan map"><svg><use href="#hand"/></svg></button>
    <button class="tool" aria-label="Pan map to selection"><svg><use href="#pan"/></svg></button>
    <button class="tool" aria-label="Zoom in"><svg><use href="#zoomin"/></svg></button>
    <button class="tool" aria-label="Zoom out"><svg><use href="#zoomout"/></svg></button>
    <button class="tool" aria-label="Zoom to native resolution"><svg><use href="#zoom11"/></svg></button>
    <button class="tool" aria-label="Zoom full"><svg><use href="#zoomfull"/></svg></button>
    <button class="tool" aria-label="Zoom to selection"><svg><use href="#zoomsel"/></svg></button>
    <button class="tool" aria-label="Zoom to layer"><svg><use href="#zoomlayer"/></svg></button>
    <button class="tool" aria-label="Zoom last"><svg><use href="#zoomprev"/></svg></button>
    <button class="tool" aria-label="Zoom next"><svg><use href="#zoomnext"/></svg></button>
    <button class="tool framed" aria-label="New bookmark"><svg><use href="#bookmarknew"/></svg></button>
    <button class="tool" aria-label="Show bookmarks"><svg><use href="#bookmark"/></svg></button>
    <button class="tool" aria-label="Refresh"><svg><use href="#refresh"/></svg></button>
    <i class="grip"></i>
    <button class="tool" aria-label="Identify features"><svg><use href="#identify"/></svg></button>
    <button class="tool" aria-label="Run feature action"><svg><use href="#action"/></svg></button>
    <button class="drop dim" aria-label="Choose action"><svg><use href="#caret"/></svg></button>
    <button class="tool" aria-label="Select features"><svg><use href="#select"/></svg></button>
    <button class="drop" aria-label="Selection tools"><svg><use href="#caret"/></svg></button>
    <button class="tool" aria-label="Select by expression"><svg><use href="#selexpr"/></svg></button>
    <button class="drop" aria-label="Expression tools"><svg><use href="#caret"/></svg></button>
    <button class="tool" aria-label="Deselect features"><svg><use href="#deselect"/></svg></button>
    <button class="tool" aria-label="Open attribute table"><svg><use href="#table"/></svg></button>
    <button class="tool" aria-label="Open field calculator"><svg><use href="#abacus"/></svg></button>
    <button class="tool" aria-label="Show statistics"><svg><use href="#sigma"/></svg></button>
    <button class="tool" aria-label="Measure line"><svg><use href="#measure"/></svg></button>
    <button class="drop" aria-label="Measure tools"><svg><use href="#caret"/></svg></button>
    <button class="tool" aria-label="Map tips"><svg><use href="#maptip"/></svg></button>
    <button class="tool" aria-label="Text annotation"><svg><use href="#annot"/></svg></button>
    <button class="drop" aria-label="Annotation tools"><svg><use href="#caret"/></svg></button>
    <i class="grip"></i>
    <button class="tool" aria-label="Help contents"><svg><use href="#help"/></svg></button>
  </div>

  <div class="toolbar">
    <i class="grip"></i>
    <button class="tool has-menu" aria-label="Current edits"><svg><use href="#pencils"/></svg></button>
    <button class="tool pressed" aria-label="Toggle editing"><svg><use href="#pencil"/></svg></button>
    <button class="tool" aria-label="Save layer edits"><svg><use href="#savegrey"/></svg></button>
    <button class="tool" aria-label="Add feature"><svg><use href="#addfeat"/></svg></button>
    <button class="tool" aria-label="Add circular string"><svg><use href="#addcurve"/></svg></button>
    <button class="drop" aria-label="Circular string tools"><svg><use href="#caret"/></svg></button>
    <button class="tool" aria-label="Move features"><svg><use href="#movefeat"/></svg></button>
    <button class="tool" aria-label="Node tool"><svg><use href="#node"/></svg></button>
    <button class="tool" aria-label="Delete selected"><svg><use href="#trash"/></svg></button>
    <button class="tool" aria-label="Cut features"><svg><use href="#cut"/></svg></button>
    <button class="tool" aria-label="Copy features"><svg><use href="#copy"/></svg></button>
    <button class="tool" aria-label="Paste features"><svg><use href="#paste"/></svg></button>
    <i class="grip"></i>
    <button class="tool" aria-label="Layer labeling"><svg><use href="#label"/></svg></button>
    <button class="tool" aria-label="Layer diagrams"><svg><use href="#diagram"/></svg></button>
    <button class="tool" aria-label="Highlight pinned labels"><svg><use href="#labelpin"/></svg></button>
    <button class="tool" aria-label="Pin labels"><svg><use href="#labelpin-grey"/></svg></button>
    <button class="tool" aria-label="Show or hide labels"><svg><use href="#labeleye"/></svg></button>
    <button class="tool" aria-label="Move label"><svg><use href="#labelmove"/></svg></button>
    <button class="tool" aria-label="Rotate label"><svg><use href="#labelrotate"/></svg></button>
    <button class="tool" aria-label="Change label"><svg><use href="#labeledit"/></svg></button>
    <i class="grip"></i>
    <button class="tool" aria-label="MetaSearch"><svg><use href="#metasearch"/></svg></button>
    <button class="tool" aria-label="Catalogue service"><svg><use href="#csw"/></svg></button>
    <i class="grip"></i>
    <button class="tool" aria-label="Python console"><svg><use href="#python"/></svg></button>
  </div>

  <main class="workspace">
    <aside class="sidebar">
      <div class="side-group">
        <i class="grip-h"></i>
        <button class="side" aria-label="GPS tools"><svg><use href="#gps"/></svg></button>
        <button class="side" aria-label="Satellite tools"><svg><use href="#satellite"/></svg></button>
        <button class="side" aria-label="Topology checker"><svg><use href="#topology"/></svg></button>
        <button class="side" aria-label="Form editor"><svg><use href="#form"/></svg></button>
      </div>
      <div class="side-group grow">
        <i class="grip-h"></i>
        <button class="side left" aria-label="Add vector layer"><svg><use href="#addvector"/></svg></button>
        <button class="side left" aria-label="Add raster layer"><svg><use href="#addraster"/></svg></button>
        <button class="side left" aria-label="Add SpatiaLite layer"><svg><use href="#addfeather"/></svg></button>
        <button class="side left" aria-label="Add PostGIS layer"><svg><use href="#addpostgis"/></svg><svg class="side-caret"><use href="#caret"/></svg></button>
        <button class="side left" aria-label="Add WMS layer"><svg><use href="#addwms"/></svg><svg class="side-caret"><use href="#caret"/></svg></button>
        <button class="side left" aria-label="Add WCS layer"><svg><use href="#addwcs"/></svg></button>
        <button class="side left" aria-label="Add WFS layer"><svg><use href="#addwfs"/></svg><svg class="side-caret"><use href="#caret"/></svg></button>
        <button class="side left" aria-label="Add delimited text layer"><svg><use href="#addcsv"/></svg></button>
        <button class="side left" aria-label="Add virtual layer"><svg><use href="#addvirtual"/></svg></button>
        <button class="side left" aria-label="New shapefile layer"><svg><use href="#newvector"/></svg><svg class="side-caret"><use href="#caret"/></svg></button>
        <button class="side" aria-label="New GPX layer"><svg><use href="#satstar"/></svg></button>
        <button class="side" aria-label="Add mask layer"><svg><use href="#mask"/></svg></button>
      </div>
    </aside>

    <section class="canvas">
      <svg class="map" viewBox="0 0 136 28" role="img" aria-label="Crime hotspots">
        <path fill="#f00" d="M2 28L1 20l2-2-1-4 3-1 1-7 3 1 2-2 5-2 1 3-1 6 1 4-2 3 3 2 5-2 2 1 1-5-1-8 4-1 6-1 1 4-1 8-2 4 4 3 2-2 3-1 4 2 2 2h7l3-3 5-1 3 3 7-3 6-2 1-5 2-4-1-4 4-2V0h31l1 6 2 6-1 5 3 5-1 6z"/>
        <path fill="#ff0" d="M104 4l3 1 2-1 2 2 4 0-1 3-2 3 4-1 2 2 2-2 3 3-1 3 4 2 1 4-2 4-4-1-1-4-3 0-2-3-4 1-1-4-3 1-2-3 2-3-4-2z"/>
      </svg>

      <div class="dialog" role="dialog" aria-label="Attribute table">
        <header class="dialog-title">
          <svg class="app-icon"><use href="#qgis"/></svg>
          <h2 class="title">crime_hotspots_vector :: Features total: 120, filtered: 120, selected: 119</h2>
          <div class="window-buttons">
            <button aria-label="Minimize table"><svg><use href="#min"/></svg></button>
            <button aria-label="Maximize table"><svg><use href="#max"/></svg></button>
            <button aria-label="Close table"><svg><use href="#close"/></svg></button>
          </div>
        </header>

        <div class="minibar">
          <button class="mini pressed" aria-label="Toggle editing mode"><svg><use href="#pencil"/></svg></button>
          <button class="mini" aria-label="Multi edit"><svg><use href="#editmulti"/></svg></button>
          <button class="mini" aria-label="Save edits"><svg><use href="#saveedit"/></svg></button>
          <button class="mini" aria-label="Reload table"><svg><use href="#refresh-grey"/></svg></button>
          <i class="sep"></i>
          <button class="mini" aria-label="Add row"><svg><use href="#addrow"/></svg></button>
          <span class="tip-anchor">
            <button class="mini framed" aria-describedby="delete-tip" aria-label="Delete"><svg><use href="#trash"/></svg></button>
            <span class="tooltip" id="delete-tip" role="tooltip">Delete selected features</span>
          </span>
          <i class="sep blank"></i>
          <button class="mini" aria-label="Select using expression"><svg><use href="#selexpr"/></svg></button>
          <button class="mini" aria-label="Select all"><svg><use href="#selall"/></svg></button>
          <button class="mini" aria-label="Invert selection"><svg><use href="#invert"/></svg></button>
          <button class="mini" aria-label="Deselect all"><svg><use href="#deselect"/></svg></button>
          <button class="mini" aria-label="Filter by form"><svg><use href="#funnel"/></svg></button>
          <button class="mini" aria-label="Move selection to top"><svg><use href="#movetop"/></svg></button>
          <button class="mini" aria-label="Pan to rows"><svg><use href="#pan"/></svg></button>
          <button class="mini" aria-label="Zoom to rows"><svg><use href="#zoomsel"/></svg></button>
          <i class="sep"></i>
          <button class="mini" aria-label="Copy rows"><svg><use href="#copy"/></svg></button>
          <button class="mini" aria-label="Paste rows"><svg><use href="#paste-y"/></svg></button>
          <i class="sep"></i>
          <button class="mini" aria-label="New field"><svg><use href="#newfield"/></svg></button>
          <button class="mini" aria-label="Delete field"><svg><use href="#delfield"/></svg></button>
          <button class="mini" aria-label="Field calculator"><svg><use href="#abacus"/></svg></button>
          <i class="sep"></i>
          <button class="mini" aria-label="Conditional formatting"><svg><use href="#condfmt"/></svg></button>
        </div>

        <div class="fieldbar">
          <label class="combo field-pick"><b>123</b><select aria-label="Field"><option>DN</option></select><span class="combo-arrow"><svg><use href="#caret"/></svg></span></label>
          <span class="equals">=</span>
          <button class="expr-button" aria-label="Expression dialog"><svg><use href="#epsilon"/></svg></button>
          <label class="combo expr"><b>123</b><input type="text" value="DN" aria-label="Expression"><span class="combo-arrow"><svg><use href="#caret"/></svg></span></label>
          <button class="push">Update All</button>
          <button class="push">Update Selected</button>
        </div>

        <div class="grid-frame">
          <div class="grid-view">
            <table>
              <thead><tr><th></th><th>DN</th></tr></thead>
              <tbody>
                <tr><th>1</th><td class="current">0</td></tr>
                <tr><th>2</th><td>0</td></tr>
                <tr><th>3</th><td>0</td></tr>
                <tr><th>4</th><td>0</td></tr>
                <tr><th>5</th><td>0</td></tr>
                <tr><th>6</th><td>0</td></tr>
                <tr><th>7</th><td>0</td></tr>
                <tr><th>8</th><td>0</td></tr>
                <tr><th>9</th><td>0</td></tr>
                <tr><th>10</th><td>0</td></tr>
                <tr><th>11</th><td>0</td></tr>
                <tr><th>12</th><td>0</td></tr>
                <tr><th>13</th><td>0</td></tr>
              </tbody>
            </table>
          </div>
          <div class="scrollbar">
            <button aria-label="Scroll table up"><svg><use href="#caret-up"/></svg></button>
            <span class="thumb short"></span>
            <span class="track"></span>
            <button aria-label="Page table up"><svg><use href="#caret-up"/></svg></button>
            <button aria-label="Scroll table down"><svg><use href="#caret"/></svg></button>
          </div>
        </div>

        <footer class="dialog-foot">
          <button class="push filter has-menu"><svg><use href="#funnel"/></svg>Show All Features</button>
          <span class="spacer"></span>
          <button class="view" aria-label="Form view"><svg><use href="#formview"/></svg></button>
          <button class="view on" aria-label="Table view"><svg><use href="#table"/></svg></button>
        </footer>
      </div>
    </section>

    <aside class="docks">
      <section class="dock">
        <header class="dock-title"><i class="dots"></i><h2>Browser Panel</h2><i class="dots"></i>
          <button aria-label="Float browser"><svg><use href="#float"/></svg></button><button aria-label="Close browser"><svg><use href="#xmark"/></svg></button></header>
        <div class="dock-tools">
          <button aria-label="Add selected layers"><svg><use href="#addlayer"/></svg></button>
          <button aria-label="Refresh browser"><svg><use href="#refresh"/></svg></button>
          <button aria-label="Filter browser"><svg><use href="#funnel"/></svg></button>
          <button aria-label="Collapse browser"><svg><use href="#collapse"/></svg></button>
          <button aria-label="Properties"><svg><use href="#info"/></svg></button>
        </div>
        <div class="tree-box">
          <ul class="tree">
            <li><i class="box">+</i><svg><use href="#folder"/></svg>Home</li>
            <li><svg><use href="#favourite"/></svg>Favourites</li>
            <li><i class="box">+</i><svg><use href="#folder"/></svg>C:/</li>
            <li><i class="box">+</i><svg><use href="#folder"/></svg>D:/</li>
            <li><i class="box">+</i><svg><use href="#folder"/></svg>Z:/</li>
            <li><svg><use href="#db2"/></svg>DB2</li>
            <li><svg><use href="#mssql"/></svg>MSSQL</li>
            <li><svg><use href="#oracle"/></svg>Oracle</li>
            <li><svg><use href="#elephant"/></svg>PostGIS</li>
            <li><svg><use href="#feather"/></svg>SpatiaLite</li>
            <li><svg><use href="#arcfeat"/></svg>ArcGisFeatureServer</li>
            <li><svg><use href="#arcmap"/></svg>ArcGisMapServer</li>
            <li><svg><use href="#ows"/></svg>OWS</li>
            <li><svg><use href="#wcs"/></svg>WCS</li>
            <li><svg><use href="#wfs"/></svg>WFS</li>
          </ul>
          <div class="scrollbar">
            <button aria-label="Scroll browser up"><svg><use href="#caret-up"/></svg></button>
            <span class="thumb long"></span>
            <span class="track"></span>
            <button aria-label="Page browser up"><svg><use href="#caret-up"/></svg></button>
            <button aria-label="Scroll browser down"><svg><use href="#caret"/></svg></button>
          </div>
        </div>
      </section>
      <i class="splitter"></i>
      <section class="dock grow">
        <header class="dock-title"><i class="dots"></i><h2>Layers Panel</h2><i class="dots"></i>
          <button aria-label="Float layers"><svg><use href="#float"/></svg></button><button aria-label="Close layers"><svg><use href="#xmark"/></svg></button></header>
        <div class="dock-tools">
          <button aria-label="Style dock"><svg><use href="#brush"/></svg></button>
          <button aria-label="Add group"><svg><use href="#addgroup"/></svg></button>
          <button class="has-menu" aria-label="Manage visibility"><svg><use href="#eye"/></svg></button>
          <button aria-label="Filter legend"><svg><use href="#funnel"/></svg></button>
          <button aria-label="Filter by expression"><svg><use href="#epsfilter"/></svg></button>
          <button class="drop slim" aria-label="Expression menu"><svg><use href="#caret"/></svg></button>
          <button aria-label="Expand all"><svg><use href="#expand"/></svg></button>
          <button aria-label="Collapse all"><svg><use href="#collapse"/></svg></button>
          <button aria-label="Remove layer"><svg><use href="#remlayer"/></svg></button>
        </div>
        <div class="tree-box grow">
          <ul class="tree layers">
            <li class="current"><label><input type="checkbox" checked><svg><use href="#vlayer"/></svg><b>crime_hotspots_vector</b></label></li>
            <li><i class="box">−</i><label><input type="checkbox" checked><svg><use href="#cells"/></svg><b>Sem_Hotspots</b></label></li>
            <li class="leaf"><i class="swatch black"></i>0</li>
            <li class="leaf last"><i class="swatch"></i>0</li>
            <li><i class="box">−</i><label><input type="checkbox" checked><svg><use href="#cells"/></svg><b>Sem_HeatMap</b></label></li>
            <li class="leaf"><i class="swatch c1"></i>0</li>
            <li class="leaf"><i class="swatch c2"></i>1.36</li>
            <li class="leaf"><i class="swatch c3"></i>2.71</li>
            <li class="leaf"><i class="swatch c4"></i>4.07</li>
            <li class="leaf last"><i class="swatch c5"></i>5.42</li>
            <li class="end"><label><input type="checkbox"><svg><use href="#points"/></svg><b>crime_subset_SPE</b></label></li>
          </ul>
        </div>
      </section>
    </aside>
  </main>

  <footer class="statusbar">
    <label for="coord">Coordinate</label>
    <input class="coord" id="coord" type="text" value="1228065,1840028">
    <button class="status-icon" aria-label="Toggle extents"><svg><use href="#extents"/></svg></button>
    <label for="scale">Scale</label>
    <span class="combo scale"><select id="scale"><option>1:290,740</option></select><span class="combo-arrow"><svg><use href="#caret"/></svg></span></span>
    <button class="status-icon" aria-label="Lock scale"><svg><use href="#lock"/></svg></button>
    <label for="mag">Magnifier</label>
    <span class="spin"><input id="mag" type="text" value="100%"><span class="steps"><svg><use href="#caret-up"/></svg><svg><use href="#caret"/></svg></span></span>
    <label for="rot">Rotation</label>
    <span class="spin"><input id="rot" type="text" value="0.0"><span class="steps"><svg><use href="#caret-up"/></svg><svg><use href="#caret"/></svg></span></span>
    <label class="render"><input type="checkbox" checked>Render</label>
    <button class="crs"><svg><use href="#crs"/></svg>USER:100000 (OTF)</button>
    <button class="status-icon" aria-label="Messages"><svg><use href="#bubble"/></svg></button>
  </footer>

  <footer class="taskbar">
    <button class="start" aria-label="Start"><svg><use href="#windows"/></svg></button>
    <label class="search"><svg><use href="#cortana"/></svg><input type="text" placeholder="Ask me anything" aria-label="Search"><svg><use href="#mic"/></svg></label>
    <button class="task" aria-label="Task view"><svg><use href="#taskview"/></svg></button>
    <button class="task" aria-label="Edge"><svg><use href="#edge"/></svg></button>
    <button class="task" aria-label="File Explorer"><svg><use href="#explorer"/></svg></button>
    <button class="task" aria-label="Store"><svg><use href="#store"/></svg></button>
    <button class="task" aria-label="NBC"><svg><use href="#peacock"/></svg></button>
    <button class="task open" aria-label="Chrome"><svg><use href="#chrome"/></svg></button>
    <button class="task" aria-label="Snipping Tool"><svg><use href="#snip"/></svg></button>
    <button class="task open" aria-label="Word"><svg><use href="#word"/></svg></button>
    <button class="task open active" aria-label="QGIS"><svg><use href="#qlogo"/></svg></button>
    <span class="spacer"></span>
    <div class="tray">
      <svg><use href="#chevron"/></svg><svg><use href="#dropbox"/></svg><svg><use href="#wifi"/></svg><svg><use href="#battery"/></svg><svg><use href="#speaker"/></svg><svg class="wide"><use href="#keyboard"/></svg>
    </div>
    <div class="clock"><time>12:26 PM</time><time>10/13/2016</time></div>
    <button class="notify" aria-label="Notifications"><svg><use href="#notify"/></svg></button>
  </footer>
</div>
</body>
</html>
```
FILE: styles.css
```css
* { box-sizing: border-box; }

body {
  margin: 0;
  font: 8px/11px "DejaVu Sans Condensed", "Noto Sans", sans-serif;
  color: #1a1a1a;
  background: #f0f0f0;
}

button, input, select {
  margin: 0;
  padding: 0;
  border: 0;
  background: none;
  font: inherit;
  color: inherit;
  outline: 0;
  appearance: none;
}

h1, h2 { margin: 0; font: inherit; }
ul { margin: 0; padding: 0; list-style: none; }
svg { display: block; flex: none; width: 16px; height: 16px; }
.sprite { display: none; }
.spacer, .grow { flex: 1; }

.glyph-5 { font: bold 5px "Liberation Sans", sans-serif; }
.glyph-abc { font: bold 6px "Liberation Sans", sans-serif; }
.glyph-csw { font: bold 6px "Liberation Sans", sans-serif; }
.glyph-w { font: bold 7px "Liberation Sans", sans-serif; }
.glyph-serif { font: bold 10px "Liberation Serif", serif; }

.app { display: flex; flex-direction: column; height: 100vh; overflow: hidden; }

/* window title */
.titlebar, .dialog-title { display: flex; align-items: center; background: #fff; }
.titlebar { height: 17px; padding-left: 2px; color: #8a8a8a; }
.app-icon { width: 11px; height: 11px; }
.title { flex: 1; margin-left: 4px; font: 8px/16px "Open Sans", sans-serif; white-space: nowrap; }
.window-buttons { display: flex; }
.window-buttons button { display: grid; place-items: center; width: 33px; height: 16px; }
.window-buttons svg { width: 10px; height: 10px; }

.menubar { display: flex; gap: 10px; height: 15px; padding: 1px 6px 0; align-items: center; }

/* toolbars */
.toolbar { display: flex; align-items: center; height: 28px; padding-bottom: 1px; border-top: 1px solid #cfcfcf; }
.grip { flex: none; width: 4px; height: 20px; margin: 0 2px 0 3px; background: radial-gradient(circle, #c4c4c4 1px, transparent 1px) 0 0 / 4px 4px; }
.grip:first-child { margin: 0 2px; }
.tool { display: grid; place-items: center; flex: none; position: relative; width: 25px; height: 24px; border-radius: 2px; }
.pressed { background: #d9d9d9; border: 1px solid #9c9c9c; }
.framed { background: #f5f5f5; border: 1px solid #9c9c9c; border-radius: 2px; }
.drop { display: grid; place-items: center; flex: none; width: 9px; height: 24px; color: #111; }
.drop svg { width: 6px; height: 6px; }
.dim { color: #999; }
.has-menu { position: relative; }
.has-menu::after { content: ""; position: absolute; right: 1px; bottom: 3px; border: 2px solid transparent; border-top-color: #111; border-bottom: 0; }

/* workspace */
.workspace { display: flex; flex: 1; min-height: 0; border-top: 2px solid #bdbdbd; }
.sidebar { display: flex; flex-direction: column; gap: 2px; width: 37px; padding-bottom: 3px; }
.side-group { display: flex; flex-direction: column; justify-content: space-between; }
.grip-h { width: 30px; height: 4px; margin: 3px 3px 0; background: radial-gradient(circle, #c4c4c4 1px, transparent 1px) 0 0 / 4px 4px; }
.side { display: flex; align-items: center; height: 24px; padding-left: 11px; }
.side.left { padding-left: 6px; gap: 5px; }
.side-caret { width: 6px; height: 6px; color: #111; }

.canvas { position: relative; flex: 1; background: #fff; border: solid #b4b4b4; border-width: 0 1px 1px; }
.map { position: absolute; left: 252px; top: 0; width: 136px; height: 28px; }

/* attribute table window */
.dialog {
  position: absolute;
  left: 47px;
  top: 24px;
  width: 468px;
  display: flex;
  flex-direction: column;
  background: #f0f0f0;
  border: 1px solid #e8905c;
  box-shadow: 2px 3px 10px rgba(0, 0, 0, .35);
}
.dialog-title { height: 21px; padding: 0 0 0 7px; color: #333; }
.dialog-title .app-icon { width: 10px; height: 10px; }
.dialog-title .title { margin-left: 6px; }

.minibar { display: flex; align-items: center; height: 22px; padding-left: 2px; }
.mini { display: grid; place-items: center; width: 19px; height: 18px; border-radius: 2px; }
.mini svg { width: 12px; height: 12px; }
.sep { width: 1px; height: 16px; margin: 0 1px; background: #c4c4c4; }
.sep.blank { background: none; }
.tip-anchor { position: relative; }
.tooltip {
  position: absolute;
  left: 16px;
  top: 27px;
  z-index: 2;
  padding: 1px 4px 1px 1px;
  border: 1px solid #222;
  background: #ffffe1;
  box-shadow: 2px 2px 1px rgba(0, 0, 0, .5);
  white-space: nowrap;
}

.fieldbar { display: flex; align-items: center; height: 20px; padding-left: 2px; }
.combo { display: flex; align-items: center; height: 16px; padding-left: 4px; border: 1px solid #b4b4b4; border-radius: 2px; background: #fff; }
.combo select, .combo input { flex: 1; min-width: 0; width: 100%; }
.combo-arrow { display: grid; place-items: center; flex: none; width: 11px; height: 14px; border-left: 1px solid #c8c8c8; background: #f4f4f4; color: #111; }
.combo-arrow svg { width: 6px; height: 6px; }
.field-pick { width: 45px; padding-left: 3px; background: #f6f6f6; }
.equals { width: 11px; text-align: center; }
.expr-button { display: grid; place-items: center; width: 18px; height: 18px; margin-right: 4px; border: 1px solid #aaa; border-radius: 2px; background: #f6f6f6; }
.expr-button svg { width: 12px; height: 12px; }
.expr { flex: 1; margin-right: 2px; padding-left: 3px; }
.push { flex: none; height: 16px; padding: 0 4px; border: 1px solid #a8a8a8; border-radius: 2px; background: #f5f5f5; }
.push + .push { margin-left: 3px; }

.grid-frame { display: flex; height: 283px; margin-top: 1px; border: solid #2b84cf; border-width: 2px 1px 1px; background: #fff; }
.grid-view { flex: 1; overflow: hidden; background: linear-gradient(#f0f0f0 15px, #fff 15px); }
.grid-view table { border-collapse: separate; border-spacing: 0; table-layout: fixed; width: 92px; }
.grid-view th, .grid-view td { height: 21px; padding: 0; font-weight: normal; }
.grid-view tr:nth-child(3n) > * { height: 22px; }
.grid-view tbody th { padding-top: 2px; }
.grid-view th:first-child { width: 20px; padding-left: 3px; text-align: left; }
.grid-view th { border: solid #a9a9a9; border-width: 0 1px 1px 0; background: #f4f4f4; }
.grid-view thead th { height: 15px; }
.grid-view td { padding-right: 2px; border: solid #7aa7d6; border-width: 0 1px 1px 0; background: #0078d7; color: #fff; text-align: right; vertical-align: top; }
.grid-view td.current { border: 1px solid #1be681; box-shadow: inset 0 0 0 1px rgba(27, 230, 129, .4); line-height: 10px; }

.scrollbar { display: flex; flex-direction: column; flex: none; width: 12px; background: #f0f0f0; border-left: 1px solid #dcdcdc; }
.scrollbar button { display: grid; place-items: center; height: 11px; border: 1px solid #aaa; background: #fafafa; color: #111; }
.scrollbar svg { width: 6px; height: 6px; }
.track { flex: 1; }
.thumb { border: 1px solid #aaa; }
.short { height: 24px; background: radial-gradient(circle, #c6c6c6 1px, transparent 1px) 0 0 / 3px 3px, #f8f8f8; }
.long { height: 118px; background: #f5f5f5; }

.dialog-foot { display: flex; align-items: center; height: 20px; padding: 0 2px; }
.filter { display: flex; align-items: center; gap: 3px; height: 17px; padding: 0 6px 0 4px; }
.filter svg { width: 10px; height: 10px; }
.view { display: grid; place-items: center; width: 18px; height: 17px; margin-left: 1px; border: 1px solid #aaa; border-radius: 2px; }
.view.on { background: #d9d9d9; }
.view svg { width: 11px; height: 11px; }

/* docks */
.docks { display: flex; flex-direction: column; flex: none; width: 234px; padding-left: 5px; }
.dock { display: flex; flex-direction: column; }
.dock-title { display: flex; align-items: center; height: 11px; padding-left: 3px; }
.dock-title h2 { margin: 0 6px; color: #222; }
.dock-title button { display: grid; place-items: center; width: 10px; height: 10px; margin-left: 1px; border: 1px solid #777; border-radius: 2px; background: #fafafa; }
.dock-title svg { width: 8px; height: 8px; }
.dots { flex: 1; height: 4px; background: radial-gradient(circle, #c8c8c8 1px, transparent 1px) 0 0 / 4px 4px; }
.dock-tools { display: flex; align-items: center; height: 25px; padding-left: 2px; }
.dock-tools button { display: grid; place-items: center; width: 19px; height: 18px; }
.dock-tools svg { width: 12px; height: 12px; }
.dock-tools .drop { width: 9px; }
.dock-tools .drop svg { width: 6px; height: 6px; }
.tree-box { display: flex; border: 1px solid #b4b4b4; border-right: 0; background: #fff; overflow: hidden; }
.splitter { width: 74px; height: 4px; margin: 0 auto; background: radial-gradient(circle, #c8c8c8 1px, transparent 1px) 0 0 / 4px 4px; }

.tree { flex: 1; }
.tree li { display: flex; align-items: center; gap: 3px; position: relative; height: 11px; padding-left: 17px; white-space: nowrap; }
.tree li:nth-child(even) { height: 12px; }
.tree svg { width: 12px; height: 12px; }
.tree li::before { content: ""; position: absolute; left: 7px; top: 0; width: 8px; height: 50%; border-bottom: 1px solid #c4c4c4; }
.tree li::after { content: ""; position: absolute; left: 7px; top: 0; bottom: 0; border-left: 1px solid #c4c4c4; }
.tree .end::after { bottom: 50%; }
.box { position: absolute; left: 4px; top: 2px; z-index: 1; width: 7px; height: 7px; border: 1px solid #999; background: #fff; font: 7px/5px "Liberation Mono", monospace; text-align: center; }
.layers label { display: flex; align-items: center; gap: 4px; }
.layers .current { background: #f0f0f0; text-decoration: underline; }
.layers .leaf { padding-left: 31px; gap: 5px; }
.layers .leaf::before { left: 22px; width: 7px; }
.layers li.leaf::after { border-right: 1px solid #c4c4c4; width: 16px; }
.layers li.leaf:nth-child(n+1)::after { left: 7px; }
.swatch { width: 11px; align-self: stretch; }
.black { background: #000; }
.c1 { background: #ffffb2; }
.c2 { background: #fecc5c; }
.c3 { background: #fd8d3c; }
.c4 { background: #f03b20; }
.c5 { background: #bd0026; }

input[type="checkbox"] { display: grid; place-items: center; flex: none; width: 9px; height: 9px; border: 1px solid #d2d2d2; background: #f8f8f8; }
input[type="checkbox"]:checked { border-color: #e8e8e8; }
input[type="checkbox"]:checked::before { content: "✖"; font: bold 9px/9px "DejaVu Sans", sans-serif; color: #111; }

/* status bar */
.statusbar { display: flex; align-items: center; flex: none; height: 21px; padding: 1px 8px 0 313px; gap: 3px; white-space: nowrap; }
.statusbar svg { width: 12px; height: 12px; }
.statusbar .coord { width: 93px; height: 14px; border: 1px solid #b8b8b8; border-radius: 2px; background: #fff; text-align: center; }
.status-icon { display: grid; place-items: center; width: 16px; height: 16px; }
.scale { width: 64px; height: 14px; }
.statusbar .combo-arrow { height: 12px; }
.statusbar .combo-arrow svg, .statusbar .steps svg { width: 6px; height: 6px; }
.spin { display: flex; width: 71px; height: 16px; margin-right: 2px; padding-left: 3px; border: 1px solid #b8b8b8; border-radius: 2px; background: #fff; }
.spin input { flex: 1; min-width: 0; }
.steps { display: flex; flex-direction: column; align-items: center; justify-content: space-around; width: 11px; border-left: 1px solid #c8c8c8; background: #f4f4f4; }
.render { display: flex; align-items: center; gap: 3px; margin-left: 3px; }
.crs { display: flex; align-items: center; gap: 2px; margin: 0 auto; }

/* desktop taskbar */
.taskbar { display: flex; align-items: stretch; flex: none; height: 29px; background: #101010; border-top: 1px solid #3c3c3c; color: #eee; font: 9px/13px "Open Sans", sans-serif; }
.start { display: grid; place-items: center; width: 34px; }
.start svg { width: 12px; height: 12px; }
.search { display: flex; align-items: center; gap: 4px; width: 246px; padding: 0 7px 0 6px; background: #333; color: #999; font-size: 10px; }
.search input { flex: 1; min-width: 0; }
.search input::placeholder { color: #999; }
.search svg:last-child { width: 14px; height: 14px; }
.task { display: grid; place-items: center; width: 29px; margin: 0 3px; }
.task.open { border-bottom: 2px solid #f08a6c; }
.task.active { width: 35px; margin: 0; background: #4a4a4a; }
.tray { display: flex; align-items: center; gap: 9px; }
.tray svg { width: 14px; height: 14px; }
.tray .wide { width: 18px; }
.clock { display: flex; flex-direction: column; justify-content: center; width: 56px; text-align: center; }
.notify { display: grid; place-items: center; width: 21px; margin-right: 12px; }
.notify svg { width: 14px; height: 14px; }
```
